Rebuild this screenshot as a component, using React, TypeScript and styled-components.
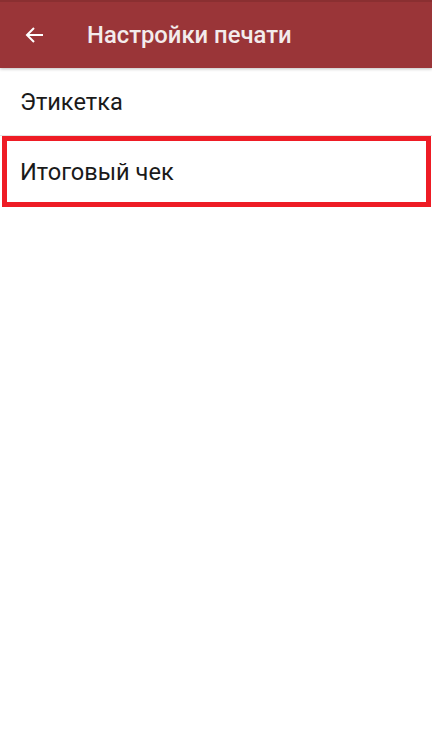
import * as React from 'react';
import styled, { createGlobalStyle } from 'styled-components';

const GlobalStyle = createGlobalStyle`
  html, body {
    margin: 0;
    padding: 0;
    background: #ffffff;
    font-family: Roboto, 'Noto Sans', sans-serif;
  }
`;

const Screen = styled.div`
  width: 432px;
  height: 740px;
  background: #ffffff;
  display: flex;
  flex-direction: column;
  overflow: hidden;
`;

const Toolbar = styled.header`
  height: 68px;
  background: #9a3538;
  border-top: 2px solid #8a2f31;
  box-sizing: border-box;
  display: flex;
  align-items: center;
  box-shadow: 0 1px 3px rgba(0, 0, 0, 0.25);
  position: relative;
  z-index: 1;
`;

const BackButton = styled.div`
  width: 68px;
  height: 100%;
  display: flex;
  align-items: center;
  padding-left: 24px;
  box-sizing: border-box;
  color: #ffffff;
`;

const Title = styled.h1`
  margin: 0 0 0 19px;
  font-size: 23.8px;
  font-weight: 500;
  color: #f3ecec;
`;

const List = styled.div`
  display: flex;
  flex-direction: column;
`;

const Item = styled.div<{ highlighted?: boolean }>`
  height: 68px;
  display: flex;
  align-items: center;
  padding-left: 20px;
  box-sizing: border-box;
  font-size: 23.6px;
  color: #1a1a1a;
  border-bottom: 1px solid #e3e3e3;
  ${(props) =>
    props.highlighted
      ? `
    margin: 0 1px 0 2px;
    height: 71px;
    border: 5px solid #ee1c25;
    padding-left: 13px;
  `
      : ''}
`;

export default function App() {
  return (
    <Screen>
      <GlobalStyle />
      <Toolbar>
        <BackButton>
          <svg width="20" height="20" viewBox="0 0 20 20" fill="none">
            <path d="M19 10H3M10 3L3 10L10 17" stroke="#ffffff" strokeWidth="2" />
          </svg>
        </BackButton>
        <Title>Настройки печати</Title>
      </Toolbar>
      <List>
        <Item>Этикетка</Item>
        <Item highlighted>Итоговый чек</Item>
      </List>
    </Screen>
  );
}
